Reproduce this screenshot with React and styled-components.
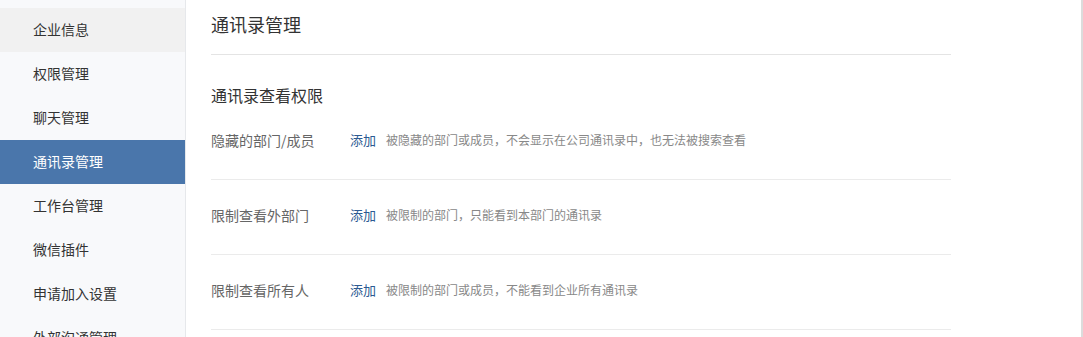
import React from 'react';
import styled, { createGlobalStyle } from 'styled-components';

const GlobalStyle = createGlobalStyle`
  html, body {
    margin: 0;
    padding: 0;
    background: #fff;
  }
  body {
    font-family: "Noto Sans CJK SC", "Noto Sans", sans-serif;
    overflow: hidden;
  }
`;

const menu = [
  '企业信息',
  '权限管理',
  '聊天管理',
  '通讯录管理',
  '工作台管理',
  '微信插件',
  '申请加入设置',
  '外部沟通管理',
];

const rows = [
  { label: '隐藏的部门/成员', desc: '被隐藏的部门或成员，不会显示在公司通讯录中，也无法被搜索查看' },
  { label: '限制查看外部门', desc: '被限制的部门，只能看到本部门的通讯录' },
  { label: '限制查看所有人', desc: '被限制的部门或成员，不能看到企业所有通讯录' },
];

const App = () => (
  <Page>
    <GlobalStyle />
    <Sidebar>
      {menu.map((m, i) => (
        <MenuItem key={m} active={i === 3} hovered={i === 0}>
          {m}
        </MenuItem>
      ))}
    </Sidebar>
    <Main>
      <Header>通讯录管理</Header>
      <SectionTitle>通讯录查看权限</SectionTitle>
      {rows.map(r => (
        <Row key={r.label}>
          <Label>{r.label}</Label>
          <AddLink>添加</AddLink>
          <Desc>{r.desc}</Desc>
        </Row>
      ))}
    </Main>
  </Page>
);

//Styled components
const Page = styled.div`
  display: flex;
  height: 337px;
  width: 1083px;
  box-sizing: border-box;
  border-right: 2px solid #dcdcdc;
  overflow: hidden;
`;

const Sidebar = styled.div`
  width: 185px;
  flex-shrink: 0;
  padding-top: 8px;
  background: #f8f9fb;
  border-right: 1px solid #e6e8eb;
`;

const MenuItem = styled.div`
  height: 44px;
  line-height: 42px;
  padding-left: 33px;
  padding-bottom: 2px;
  box-sizing: border-box;
  font-size: 14px;
  color: ${({ active }) => (active ? '#fff' : '#333')};
  background: ${({ active, hovered }) =>
    active ? '#4a76ab' : hovered ? '#f1f1f1' : 'transparent'};
  cursor: pointer;
`;

const Main = styled.div`
  padding-left: 25px;
  width: 740px;
`;

const Header = styled.div`
  padding: 12px 0 18px;
  line-height: 24px;
  font-size: 18px;
  color: #333;
  border-bottom: 1px solid #e4e4e4;
`;

const SectionTitle = styled.div`
  margin-top: 30px;
  line-height: 20px;
  font-size: 16px;
  color: #333;
`;

const Row = styled.div`
  display: flex;
  align-items: center;
  height: 75px;
  padding-bottom: 5px;
  box-sizing: border-box;
  border-bottom: 1px solid #ebebeb;
`;

const Label = styled.div`
  width: 139px;
  font-size: 14px;
  color: #666;
`;

const AddLink = styled.a`
  font-size: 13px;
  color: #2c5a92;
  cursor: pointer;
  margin-right: 10px;
`;

const Desc = styled.span`
  font-size: 12px;
  color: #888;
`;

export default App;
